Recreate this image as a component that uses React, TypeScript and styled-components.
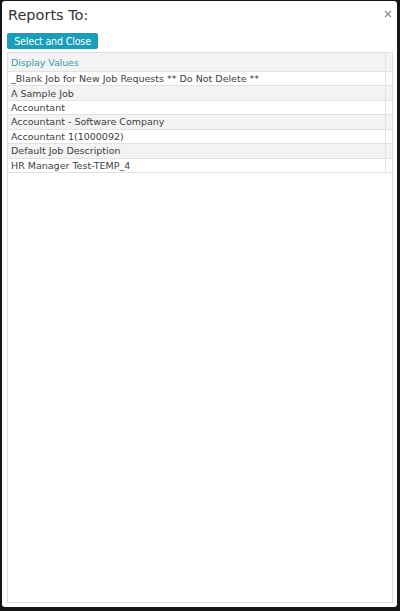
import React from "react";
import styled, { createGlobalStyle } from "styled-components";

const Global = createGlobalStyle`
  html, body { margin: 0; padding: 0; background: #161616; }
  body { width: 400px; height: 611px; overflow: hidden; }
  #root { width: 400px; height: 611px; }
`;

const Dialog = styled.div`
  box-sizing: border-box;
  margin: 1px 3px 0 2px;
  height: 606px;
  background: #ffffff;
  border-radius: 3px;
  display: flex;
  flex-direction: column;
  padding: 0 4px 4px 5px;
  font-family: "DejaVu Sans", Verdana, sans-serif;
`;

const TitleBar = styled.div`
  display: flex;
  justify-content: space-between;
  align-items: flex-start;
  height: 32px;
`;

const Title = styled.h1`
  margin: 6px 0 0 1px;
  font-family: "DejaVu Sans", Verdana, sans-serif;
  font-weight: normal;
  font-size: 14.5px;
  color: #333333;
`;

const Close = styled.button`
  border: none;
  background: none;
  padding: 0;
  margin: 9px 1px 0 0;
  width: 8px;
  height: 8px;
  display: flex;
  align-items: center;
  justify-content: center;
  cursor: pointer;
`;

const PrimaryButton = styled.button`
  align-self: flex-start;
  box-sizing: border-box;
  height: 16px;
  width: 91px;
  margin: 0 0 3px 0;
  padding: 0;
  border: none;
  border-radius: 2px;
  background: #1a9db8;
  color: #ffffff;
  font-family: "DejaVu Sans", Verdana, sans-serif;
  font-size: 9.6px;
  letter-spacing: -0.2px;
`;

const Panel = styled.div`
  flex: 1;
  border: 1px solid #dedede;
  background: #ffffff;
  display: flex;
  flex-direction: column;
`;

const Row = styled.div<{ $header?: boolean; $alt?: boolean }>`
  display: grid;
  grid-template-columns: 1fr 6px;
  box-sizing: border-box;
  height: ${(p) => (p.$header ? "19px" : "14.43px")};
  background: ${(p) => (p.$header || p.$alt ? "#f3f3f3" : "#ffffff")};
  border-bottom: 1px solid #e2e2e2;
`;

const Cell = styled.div<{ $header?: boolean }>`
  display: flex;
  align-items: center;
  padding-left: 3px;
  font-size: 9.5px;
  color: ${(p) => (p.$header ? "#3a9ab2" : "#404040")};
  letter-spacing: ${(p) => (p.$header ? "-0.1px" : "0")};
  white-space: nowrap;
  overflow: hidden;
  border-right: 1px solid #e2e2e2;
`;

const Gutter = styled.div``;

const rows = [
  "_Blank Job for New Job Requests ** Do Not Delete **",
  "A Sample Job",
  "Accountant",
  "Accountant - Software Company",
  "Accountant 1(1000092)",
  "Default Job Description",
  "HR Manager Test-TEMP_4",
];

export default function App() {
  return (
    <>
      <Global />
      <Dialog>
        <TitleBar>
          <Title>Reports To:</Title>
          <Close aria-label="Close">
            <svg width="8" height="8" viewBox="0 0 8 8">
              <path d="M1 1 L7 7 M7 1 L1 7" stroke="#8a8a8a" strokeWidth="1.3" />
            </svg>
          </Close>
        </TitleBar>
        <PrimaryButton>Select and Close</PrimaryButton>
        <Panel>
          <Row $header>
            <Cell $header>Display Values</Cell>
            <Gutter />
          </Row>
          {rows.map((r, i) => (
            <Row key={r} $alt={i % 2 === 1}>
              <Cell>{r}</Cell>
              <Gutter />
            </Row>
          ))}
        </Panel>
      </Dialog>
    </>
  );
}
